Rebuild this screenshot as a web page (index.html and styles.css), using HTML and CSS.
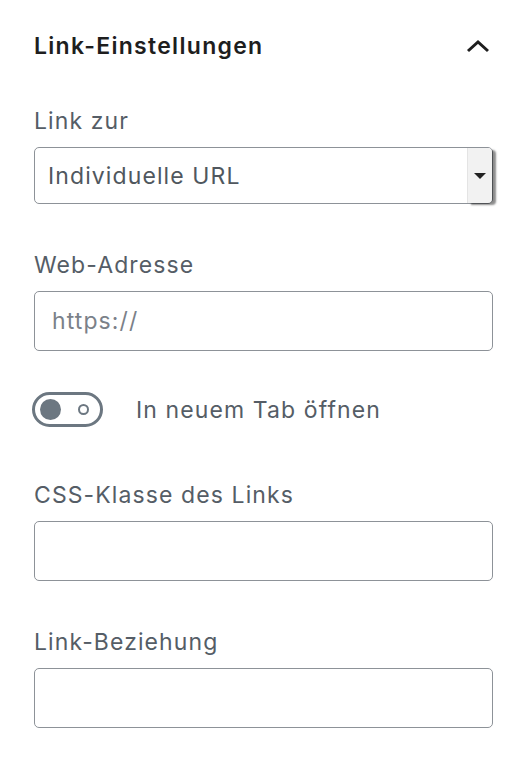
FILE: index.html
```html
<!DOCTYPE html>
<html>
<head>
    <link rel="stylesheet" href="styles.css">
</head>
<body>
    <div class="panel">
        <div class="panel-header">
            <h2>Link-Einstellungen</h2>
            <svg class="chevron" width="26" height="16" viewBox="0 0 26 16">
                <path d="M3 13 L13 4 L23 13" fill="none" stroke="#1e1e1e" stroke-width="3"/>
            </svg>
        </div>

        <div class="field">
            <label>Link zur</label>
            <div class="select">
                <span class="select-value">Individuelle URL</span>
                <span class="select-arrow"></span>
            </div>
        </div>

        <div class="field">
            <label>Web-Adresse</label>
            <div class="input placeholder">https://</div>
        </div>

        <div class="toggle-row">
            <span class="toggle">
                <span class="knob"></span>
                <span class="ring"></span>
            </span>
            <span class="toggle-label">In neuem Tab öffnen</span>
        </div>

        <div class="field">
            <label>CSS-Klasse des Links</label>
            <div class="input"></div>
        </div>

        <div class="field">
            <label>Link-Beziehung</label>
            <div class="input"></div>
        </div>
    </div>
</body>
</html>
```

FILE: styles.css
```css
body {
    margin: 0;
    background: #fff;
    font-family: Inter, "Liberation Sans", Arial, sans-serif;
    color: #555d66;
}
.panel {
    padding: 31px 34px 0 34px;
}
.panel-header {
    display: flex;
    justify-content: space-between;
    align-items: center;
    height: 30px;
    margin-bottom: 45px;
}
.panel-header h2 {
    margin: 0;
    font-size: 23px;
    font-weight: 600;
    color: #1e1e1e;
    letter-spacing: 1.3px;
}
.chevron {
    margin-right: 2px;
}
.field {
    margin-bottom: 46px;
}
.field label {
    display: block;
    font-size: 23px;
    line-height: 30px;
    margin-bottom: 11px;
    letter-spacing: 1.1px;
}
.select {
    display: flex;
    align-items: center;
    justify-content: space-between;
    height: 57px;
    border: 1px solid #8d9298;
    border-radius: 5px;
    box-sizing: border-box;
    padding-left: 13px;
}
.select-value {
    font-size: 23px;
    color: #50575e;
    letter-spacing: 1.1px;
}
.select-arrow {
    align-self: stretch;
    width: 24px;
    background: #f2f2f2;
    border-left: 1px solid #e4e4e4;
    border-radius: 0 4px 4px 0;
    box-shadow: 4px 2px 2px rgba(0, 0, 0, 0.45);
    display: flex;
    align-items: center;
    justify-content: center;
}
.select-arrow::after {
    content: "";
    border-left: 6px solid transparent;
    border-right: 6px solid transparent;
    border-top: 6px solid #222;
}
.input {
    height: 60px;
    border: 1px solid #8d9298;
    border-radius: 5px;
    box-sizing: border-box;
    padding-left: 17px;
    display: flex;
    align-items: center;
    font-size: 23px;
    letter-spacing: 1.1px;
}
.placeholder {
    color: #7b8189;
}
.toggle-row {
    display: flex;
    align-items: center;
    margin-top: -5px;
    margin-bottom: 53px;
}
.toggle {
    width: 71px;
    height: 35px;
    box-sizing: border-box;
    border: 3px solid #6c7781;
    border-radius: 18px;
    margin-left: -2px;
    display: flex;
    align-items: center;
    justify-content: space-between;
    padding: 0 11px 0 5px;
}
.knob {
    width: 21px;
    height: 21px;
    border-radius: 50%;
    background: #6c7781;
}
.ring {
    width: 7px;
    height: 7px;
    border-radius: 50%;
    border: 2px solid #6c7781;
}
.toggle-label {
    margin-left: 33px;
    font-size: 23px;
    letter-spacing: 1.1px;
}
```
